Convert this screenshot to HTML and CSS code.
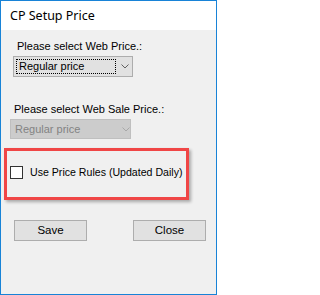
FILE: index.html
```html
<!DOCTYPE html>
<html>
<head>
<meta charset="utf-8">
<link rel="stylesheet" href="styles.css">
</head>
<body>
<div class="window">
  <div class="titlebar">CP Setup Price</div>
  <div class="content">
    <div class="label label-web">Please select Web Price.:</div>
    <div class="combo combo-web">
      <div class="focus">Regular price</div>
      <svg class="chev" width="8" height="5" viewBox="0 0 8 5"><polyline points="0.5,0.5 4,4 7.5,0.5" fill="none" stroke="#606060" stroke-width="1"/></svg>
    </div>
    <div class="label label-sale">Please select Web Sale Price.:</div>
    <div class="combo combo-sale">
      <div class="plain">Regular price</div>
      <svg class="chev" width="8" height="5" viewBox="0 0 8 5"><polyline points="0.5,0.5 4,4 7.5,0.5" fill="none" stroke="#a8a8a8" stroke-width="1"/></svg>
    </div>
    <div class="highlight">
      <div class="check">
        <span class="box"></span>
        <span class="check-text">Use Price Rules (Updated Daily)</span>
      </div>
    </div>
    <div class="buttons">
      <div class="btn">Save</div>
      <div class="btn">Close</div>
    </div>
  </div>
</div>
</body>
</html>
```
FILE: styles.css
```css
html, body {
  margin: 0;
  padding: 0;
  background: #ffffff;
}
.window {
  width: 217px;
  height: 295px;
  box-sizing: border-box;
  border: 1px solid #1883d7;
  display: flex;
  flex-direction: column;
  font-family: "Liberation Sans", Arial, sans-serif;
  font-size: 11px;
  color: #000;
}
.titlebar {
  height: 29px;
  line-height: 29px;
  background: #ffffff;
  padding-left: 9px;
  font-family: "Noto Sans", "Open Sans", sans-serif;
  font-size: 12.5px;
}
.content {
  flex: 1;
  background: #f0f0f0;
  display: flex;
  flex-direction: column;
  align-items: flex-start;
}
.label {
  line-height: 13px;
  height: 13px;
  white-space: nowrap;
}
.label-web {
  margin: 10px 0 0 16px;
}
.combo {
  box-sizing: border-box;
  display: flex;
  align-items: center;
}
.combo-web {
  margin: 3px 0 0 12px;
  width: 120px;
  height: 21px;
  border: 1px solid #adadad;
  background: #e1e1e1;
  padding-left: 2px;
}
.focus {
  box-sizing: border-box;
  width: 100px;
  height: 15px;
  border: 1px dotted #000;
  line-height: 13px;
  padding-left: 2px;
  font-size: 11px;
  white-space: nowrap;
}
.combo-web .chev {
  margin-left: 5px;
  flex-shrink: 0;
}
.label-sale {
  margin: 26px 0 0 13px;
}
.combo-sale {
  margin: 3px 0 0 9px;
  width: 121px;
  height: 20px;
  border: 1px solid #bfbfbf;
  background: #cccccc;
  color: #838383;
  padding-left: 4px;
}
.plain {
  width: 100px;
  line-height: 13px;
  font-size: 11px;
  white-space: nowrap;
}
.combo-sale .chev {
  margin-left: 7px;
  flex-shrink: 0;
}
.highlight {
  margin: 9px 0 0 3px;
  width: 185px;
  height: 52px;
  box-sizing: border-box;
  border: 3px solid #f04646;
  box-shadow: 2px 2px 3px rgba(0, 0, 0, 0.3);
  padding: 15px 0 0 3px;
}
.check {
  display: flex;
  align-items: center;
  height: 13px;
}
.box {
  flex-shrink: 0;
  width: 13px;
  height: 13px;
  box-sizing: border-box;
  border: 1px solid #333333;
  background: #ffffff;
}
.check-text {
  margin-left: 7px;
  font-size: 10.6px;
  line-height: 13px;
  white-space: nowrap;
}
.buttons {
  margin: 20px 0 0 13px;
  display: flex;
  gap: 46px;
}
.btn {
  width: 73px;
  height: 21px;
  box-sizing: border-box;
  border: 1px solid #adadad;
  background: #e1e1e1;
  text-align: center;
  line-height: 19px;
  font-size: 11.5px;
}
```
